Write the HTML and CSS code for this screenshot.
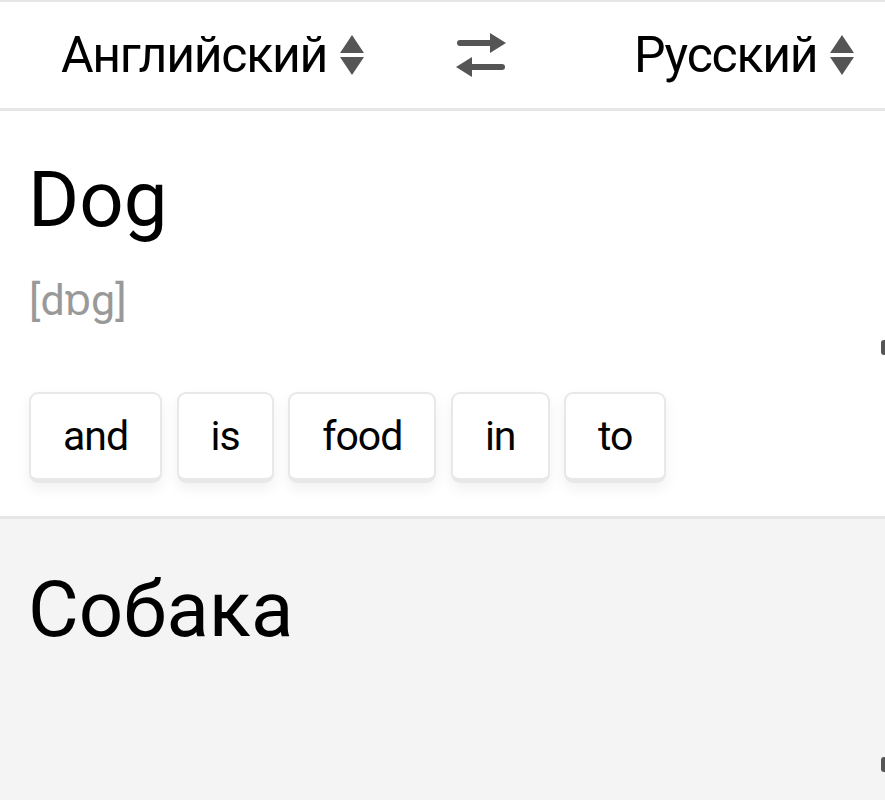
FILE: index.html
```html
<!DOCTYPE html>
<html lang="ru">
<head>
    <meta charset="UTF-8">
    <title>Переводчик</title>
    <link rel="stylesheet" href="styles.css">
</head>
<body>
    <div class="lang-bar">
        <div class="lang from">
            <span>Английский</span>
            <svg class="sort" viewBox="0 0 24 40" width="24" height="40"><path d="M12 0 L24 18 H0 Z M0 22 H24 L12 40 Z" fill="#555"/></svg>
        </div>
        <svg class="swap" viewBox="0 0 50 44" width="50" height="44">
            <path d="M4 10 H38" stroke="#555" stroke-width="6" stroke-linecap="round"/>
            <path d="M34 0 L50 10 L34 20 Z" fill="#555"/>
            <path d="M46 34 H12" stroke="#555" stroke-width="6" stroke-linecap="round"/>
            <path d="M16 24 L0 34 L16 44 Z" fill="#555"/>
        </svg>
        <div class="lang to">
            <span>Русский</span>
            <svg class="sort" viewBox="0 0 24 40" width="24" height="40"><path d="M12 0 L24 18 H0 Z M0 22 H24 L12 40 Z" fill="#555"/></svg>
        </div>
    </div>

    <div class="source">
        <div class="word">Dog</div>
        <div class="transcription">[dɒg]</div>
        <ul class="chips">
            <li>and</li>
            <li>is</li>
            <li>food</li>
            <li>in</li>
            <li>to</li>
        </ul>
        <span class="edge-mark"></span>
    </div>

    <div class="result">
        <div class="word">Собака</div>
        <span class="edge-mark"></span>
    </div>
</body>
</html>
```
FILE: styles.css
```css
body{margin:0;font-family:Roboto,"Noto Sans",sans-serif;color:#000;background:#fff;}
ul{list-style:none;margin:0;padding:0;}

.lang-bar{
    display:flex;
    align-items:center;
    height:106px;
    border-top:2px solid #e6e6e6;
    border-bottom:3px solid #e6e6e6;
}
.lang{display:flex;align-items:center;font-size:50px;letter-spacing:-1.3px;}
.lang .sort{margin-left:13px;}
.lang.from{margin-left:61px;}
.swap{margin-left:92px;}
.lang.to{margin-left:128px;}

.source{position:relative;height:405px;border-bottom:3px solid #e6e6e6;}
.word{font-size:78px;padding:42px 0 0 28px;line-height:1.2;}
.transcription{font-size:43px;color:#999;padding:22px 0 0 29px;}
.chips{display:flex;gap:14.5px;margin-top:64px;padding:0 0 0 29px;}
.chips li{
    font-size:41px;
    letter-spacing:-1px;
    height:84px;
    line-height:84px;
    padding:0 32px;
    border:2px solid #e8e8e8;
    border-bottom-width:5px;
    border-radius:9px;
    box-shadow:0 6px 14px rgba(0,0,0,.06);
}

.result{position:relative;height:281px;background:#f4f4f4;}
.result .word{padding-top:44px;}

.edge-mark{position:absolute;right:0;width:4px;height:15px;background:#555;border-radius:3px 0 0 3px;}
.source .edge-mark{top:229px;}
.result .edge-mark{top:238px;}
```
